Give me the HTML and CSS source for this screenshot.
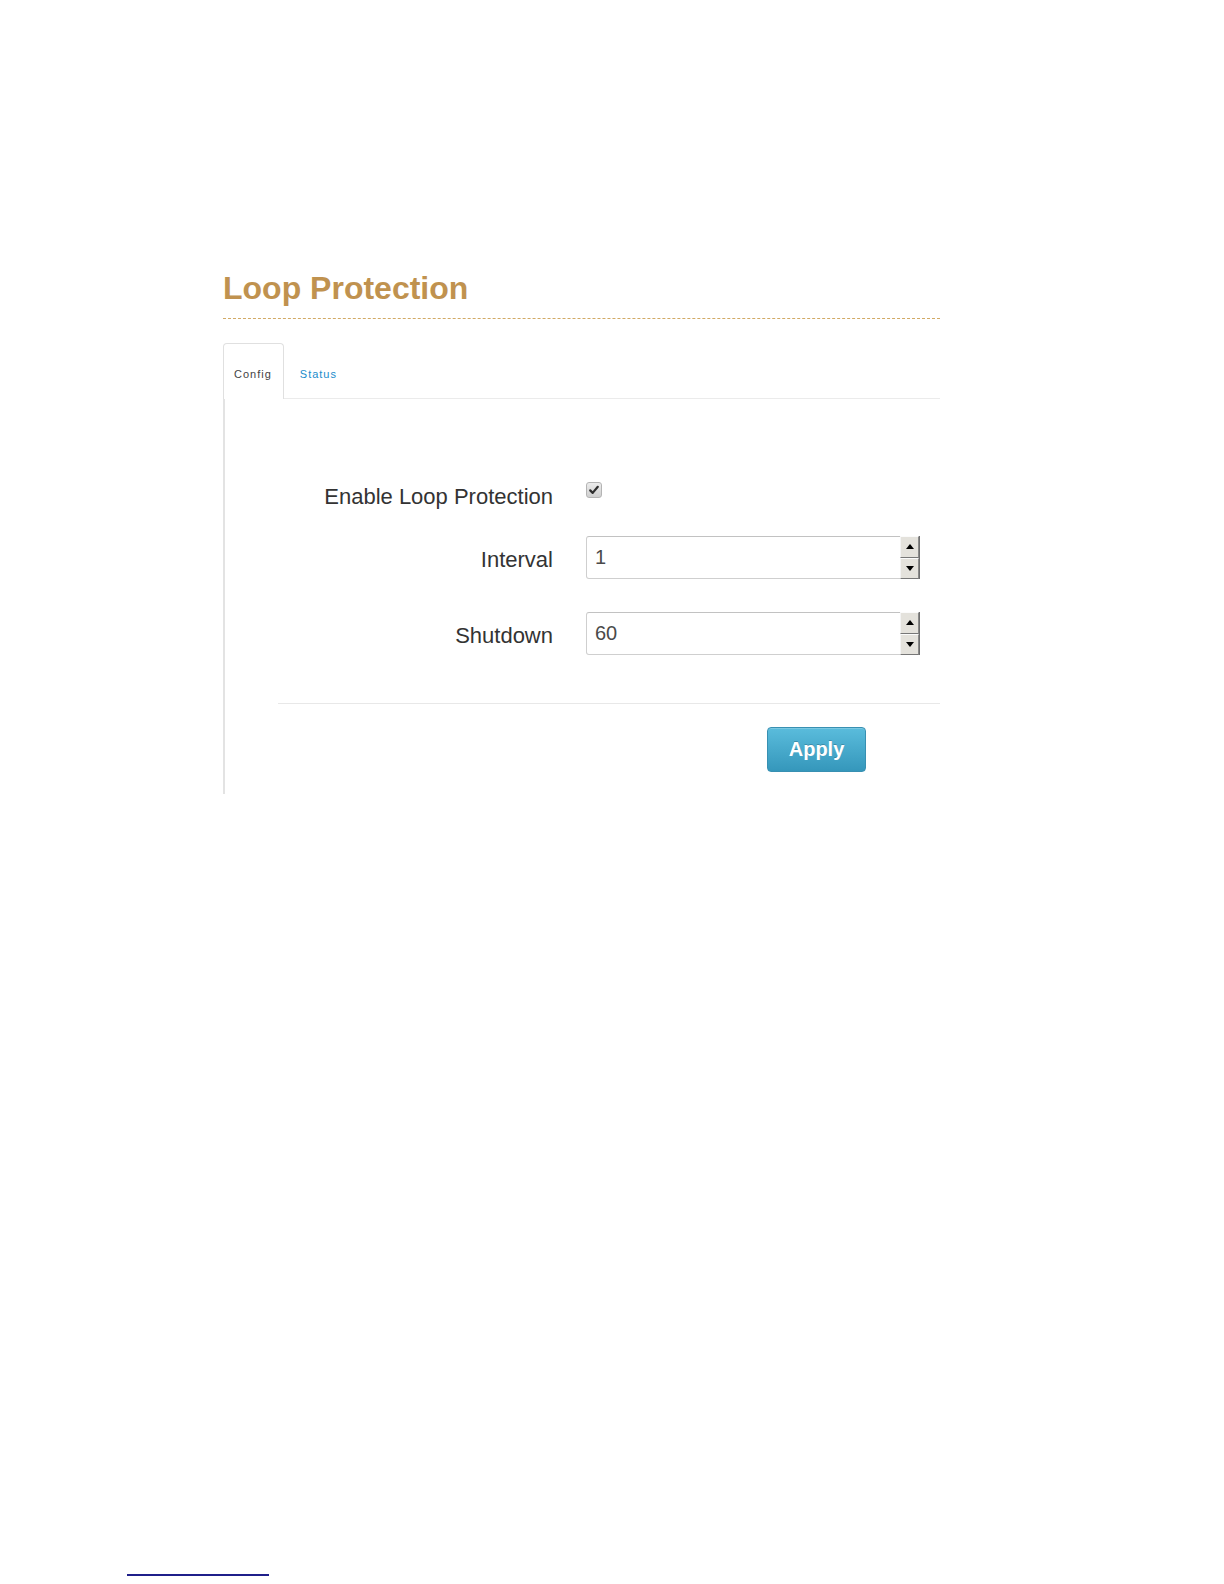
FILE: index.html
```html
<!DOCTYPE html>
<html lang="en">
<head>
    <meta charset="UTF-8">
    <meta name="viewport" content="width=device-width, initial-scale=1.0">
    <title>Loop Protection</title>
    <link rel="stylesheet" href="styles.css">
</head>
<body>
    <div class="page">
        <h1 class="page-title">Loop Protection</h1>

        <ul class="tabs">
            <li class="tab active"><a href="#">Config</a></li>
            <li class="tab"><a href="#">Status</a></li>
        </ul>

        <div class="tab-panel">
            <form class="config-form">
                <div class="form-row row-check">
                    <label class="form-label" for="enable-loop">Enable Loop Protection</label>
                    <span class="checkbox" id="enable-loop">
                        <svg width="12" height="12" viewBox="0 0 12 12"><path d="M2.2 6.4 L4.7 8.9 L9.8 2.8" fill="none" stroke="#2e2e2e" stroke-width="2.2" stroke-linecap="round" stroke-linejoin="round"/></svg>
                    </span>
                </div>
                <div class="form-row">
                    <label class="form-label" for="interval">Interval</label>
                    <div class="spin">
                        <input type="text" id="interval" value="1">
                        <div class="spin-buttons">
                            <span class="spin-btn"><i class="arrow-up"></i></span>
                            <span class="spin-btn"><i class="arrow-down"></i></span>
                        </div>
                    </div>
                </div>
                <div class="form-row">
                    <label class="form-label" for="shutdown">Shutdown</label>
                    <div class="spin">
                        <input type="text" id="shutdown" value="60">
                        <div class="spin-buttons">
                            <span class="spin-btn"><i class="arrow-up"></i></span>
                            <span class="spin-btn"><i class="arrow-down"></i></span>
                        </div>
                    </div>
                </div>
            </form>

            <div class="form-divider"></div>

            <div class="form-actions">
                <button type="button" class="btn-apply">Apply</button>
            </div>
        </div>
    </div>

    <div class="footnote-rule"></div>
</body>
</html>
```

FILE: styles.css
```css
/* Page frame */
body {
    margin: 0;
    font-family: "Liberation Sans", Arial, sans-serif;
    color: #333;
    background-color: #fff;
}
.page {
    width: 717px;
    margin-left: 223px;
    padding-top: 270px;
}
.page-title {
    margin: 0;
    font-size: 32px;
    line-height: 36px;
    font-weight: bold;
    color: #c0924f;
    padding-bottom: 12px;
    border-bottom: 1px dashed #d2aa66;
}

/* Tabs */
.tabs {
    display: flex;
    gap: 5px;
    list-style: none;
    margin: 24px 0 0 0;
    padding: 0;
    border-bottom: 1px solid #ebebeb;
}
.tab {
    margin-bottom: -1px;
}
.tab a {
    display: block;
    padding: 23px 11px 18px 10px;
    line-height: 14px;
    font-size: 11px;
    letter-spacing: 1px;
    text-decoration: none;
    color: #1a8ccb;
    border: 1px solid transparent;
    border-bottom: none;
    border-radius: 4px 4px 0 0;
}
.tab.active a {
    color: #444;
    background-color: #fff;
    border-color: #e0e0e0;
}

/* Panel */
.tab-panel {
    border-left: 2px solid #e3e3e3;
    padding: 81px 0 22px 0;
}
.config-form {
    margin: 0;
}
.form-row {
    display: flex;
    align-items: center;
    margin-bottom: 33px;
}
.form-row:last-child {
    margin-bottom: 0;
}
.row-check {
    align-items: flex-start;
    margin-bottom: 26px;
}
.form-label {
    width: 328px;
    margin-right: 33px;
    padding-top: 4px;
    text-align: right;
    font-size: 22px;
    line-height: 26px;
    color: #333;
}
.checkbox {
    display: flex;
    align-items: center;
    justify-content: center;
    width: 14px;
    height: 14px;
    margin-top: 2px;
    border: 1px solid #b4b4b4;
    border-radius: 3px;
    background: linear-gradient(#ececec, #cfcfcf);
}

/* Number field with spinner */
.spin {
    display: flex;
    width: 332px;
    height: 41px;
    border: 1px solid #cfcfcf;
    border-top-color: #c2c2c2;
    border-radius: 3px;
    background-color: #fff;
}
.spin input {
    flex: 1;
    min-width: 0;
    border: none;
    outline: none;
    padding: 0 0 0 8px;
    font-family: "Liberation Sans", Arial, sans-serif;
    font-size: 20px;
    color: #4a4a4a;
    background: transparent;
}
.spin-buttons {
    display: flex;
    flex-direction: column;
    width: 19px;
    margin: -1px -1px -1px 0;
    border-right: 1px solid #6f6f6f;
}
.spin-btn {
    flex: 1;
    display: flex;
    align-items: center;
    justify-content: center;
    background-color: #e4e2dc;
    border: 1px solid;
    border-color: #fbfbfb #8a8a8a #777 #f4f4f4;
}
.arrow-up, .arrow-down {
    width: 0;
    height: 0;
    border-left: 4px solid transparent;
    border-right: 4px solid transparent;
}
.arrow-up {
    border-bottom: 5px solid #000;
}
.arrow-down {
    border-top: 5px solid #000;
}

/* Actions */
.form-divider {
    margin: 48px 0 0 53px;
    border-top: 1px solid #e8e8e8;
}
.form-actions {
    padding: 23px 0 0 542px;
}
.btn-apply {
    display: block;
    width: 99px;
    height: 45px;
    padding: 0;
    font-family: "Liberation Sans", Arial, sans-serif;
    font-size: 20px;
    font-weight: bold;
    color: #fff;
    text-shadow: 0 -1px 0 rgba(0, 0, 0, 0.2);
    background: linear-gradient(#5abcdc, #3597bb);
    border: 1px solid #3890b2;
    border-radius: 4px;
    box-shadow: inset 0 1px 0 rgba(255, 255, 255, 0.2);
    cursor: pointer;
}

/* Footnote separator at page bottom */
.footnote-rule {
    width: 142px;
    height: 2px;
    margin: 780px 0 0 127px;
    background-color: #1f1f8a;
}
```
